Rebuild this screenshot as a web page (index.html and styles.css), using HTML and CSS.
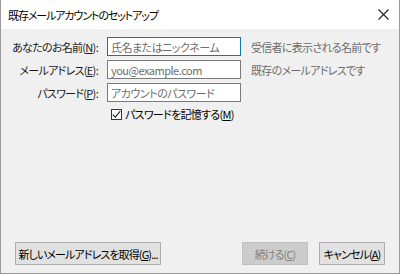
FILE: index.html
```html
<!DOCTYPE html>
<html lang="ja">
<head>
    <meta charset="UTF-8">
    <title>既存メールアカウントのセットアップ</title>
    <link rel="stylesheet" href="styles.css">
</head>
<body>
    <div class="window">
        <div class="titlebar">
            <span class="title">既存メールアカウントのセットアップ</span>
            <svg class="close" width="11" height="11" viewBox="0 0 11 11">
                <path d="M0.5 0.5L10.5 10.5M10.5 0.5L0.5 10.5" stroke="#222" stroke-width="1.1" fill="none"/>
            </svg>
        </div>
        <div class="content">
            <div class="form">
                <label class="label">あなたのお名前(<u>N</u>):</label>
                <input class="field focused" type="text" placeholder="氏名またはニックネーム">
                <span class="hint">受信者に表示される名前です</span>

                <label class="label">メールアドレス(<u>E</u>):</label>
                <input class="field" type="text" placeholder="you@example.com">
                <span class="hint">既存のメールアドレスです</span>

                <label class="label">パスワード(<u>P</u>):</label>
                <input class="field" type="password" placeholder="アカウントのパスワード">
                <span></span>

                <span></span>
                <label class="remember">
                    <span class="checkbox">
                        <svg width="9" height="9" viewBox="0 0 9 9">
                            <path d="M0.8 4.6L3.3 7.2L8.3 1.2" stroke="#222" stroke-width="1.1" fill="none"/>
                        </svg>
                    </span>
                    <span>パスワードを記憶する(<u>M</u>)</span>
                </label>
            </div>
            <div class="footer">
                <button class="btn wide">新しいメールアドレスを取得(<u>G</u>)...</button>
                <div class="spacer"></div>
                <button class="btn disabled">続ける(<u>C</u>)</button>
                <button class="btn">キャンセル(<u>A</u>)</button>
            </div>
        </div>
    </div>
</body>
</html>
```

FILE: styles.css
```css
body {
    margin: 0;
    background-color: #ffffff;
    font-family: "Noto Sans CJK JP", "Liberation Sans", sans-serif;
    font-size: 11px;
    letter-spacing: -0.7px;
    font-feature-settings: "palt";
    color: #000;
}
.window {
    width: 400px;
    height: 274px;
    box-sizing: border-box;
    border: 1px solid #9a9a9a;
    border-top: none;
    display: flex;
    flex-direction: column;
    background-color: #f0f0f0;
}
.titlebar {
    height: 29px;
    background-color: #ffffff;
    display: flex;
    align-items: center;
    padding: 0 10px 0 7px;
    flex-shrink: 0;
}
.title {
    flex: 1;
    font-size: 11px;
    letter-spacing: -1.1px;
    color: #000;
}
.content {
    flex: 1;
    display: flex;
    flex-direction: column;
    padding: 8px 14px 8px 0;
}
.form {
    display: grid;
    grid-template-columns: 97px 134px auto;
    column-gap: 9px;
    row-gap: 4px;
    align-items: center;
}
.label {
    text-align: right;
    white-space: nowrap;
    color: #1a1a1a;
}
.field {
    box-sizing: border-box;
    width: 134px;
    height: 19px;
    margin: 0;
    border: 1px solid #7a7a7a;
    background: #fff;
    padding: 0 3px;
    font-family: inherit;
    font-size: 11px;
    letter-spacing: -0.5px;
    font-feature-settings: "palt";
    outline: none;
}
.field::placeholder {
    color: #6d6d6d;
}
.field.focused {
    border-color: #0078d7;
}
.hint {
    color: #6d6d6d;
    margin-left: 1px;
    white-space: nowrap;
}
.remember {
    grid-column: 2 / 4;
    display: flex;
    align-items: center;
    gap: 3px;
    padding-left: 4px;
}
.checkbox {
    width: 11px;
    height: 11px;
    box-sizing: border-box;
    border: 1px solid #333;
    background: #fff;
    display: flex;
    align-items: center;
    justify-content: center;
}
.footer {
    margin-top: auto;
    display: flex;
    gap: 11px;
    padding-left: 14px;
}
.spacer {
    flex: 1;
}
.btn {
    height: 23px;
    width: 66px;
    box-sizing: border-box;
    border: 1px solid #adadad;
    background-color: #e1e1e1;
    font-family: inherit;
    font-size: 11px;
    letter-spacing: -0.9px;
    font-feature-settings: "palt";
    padding: 0;
    color: #000;
    white-space: nowrap;
}
.btn.wide {
    width: 146px;
}
.btn.disabled {
    background-color: #cccccc;
    border-color: #bfbfbf;
    color: #838383;
}
u {
    text-underline-offset: 1px;
}
```
